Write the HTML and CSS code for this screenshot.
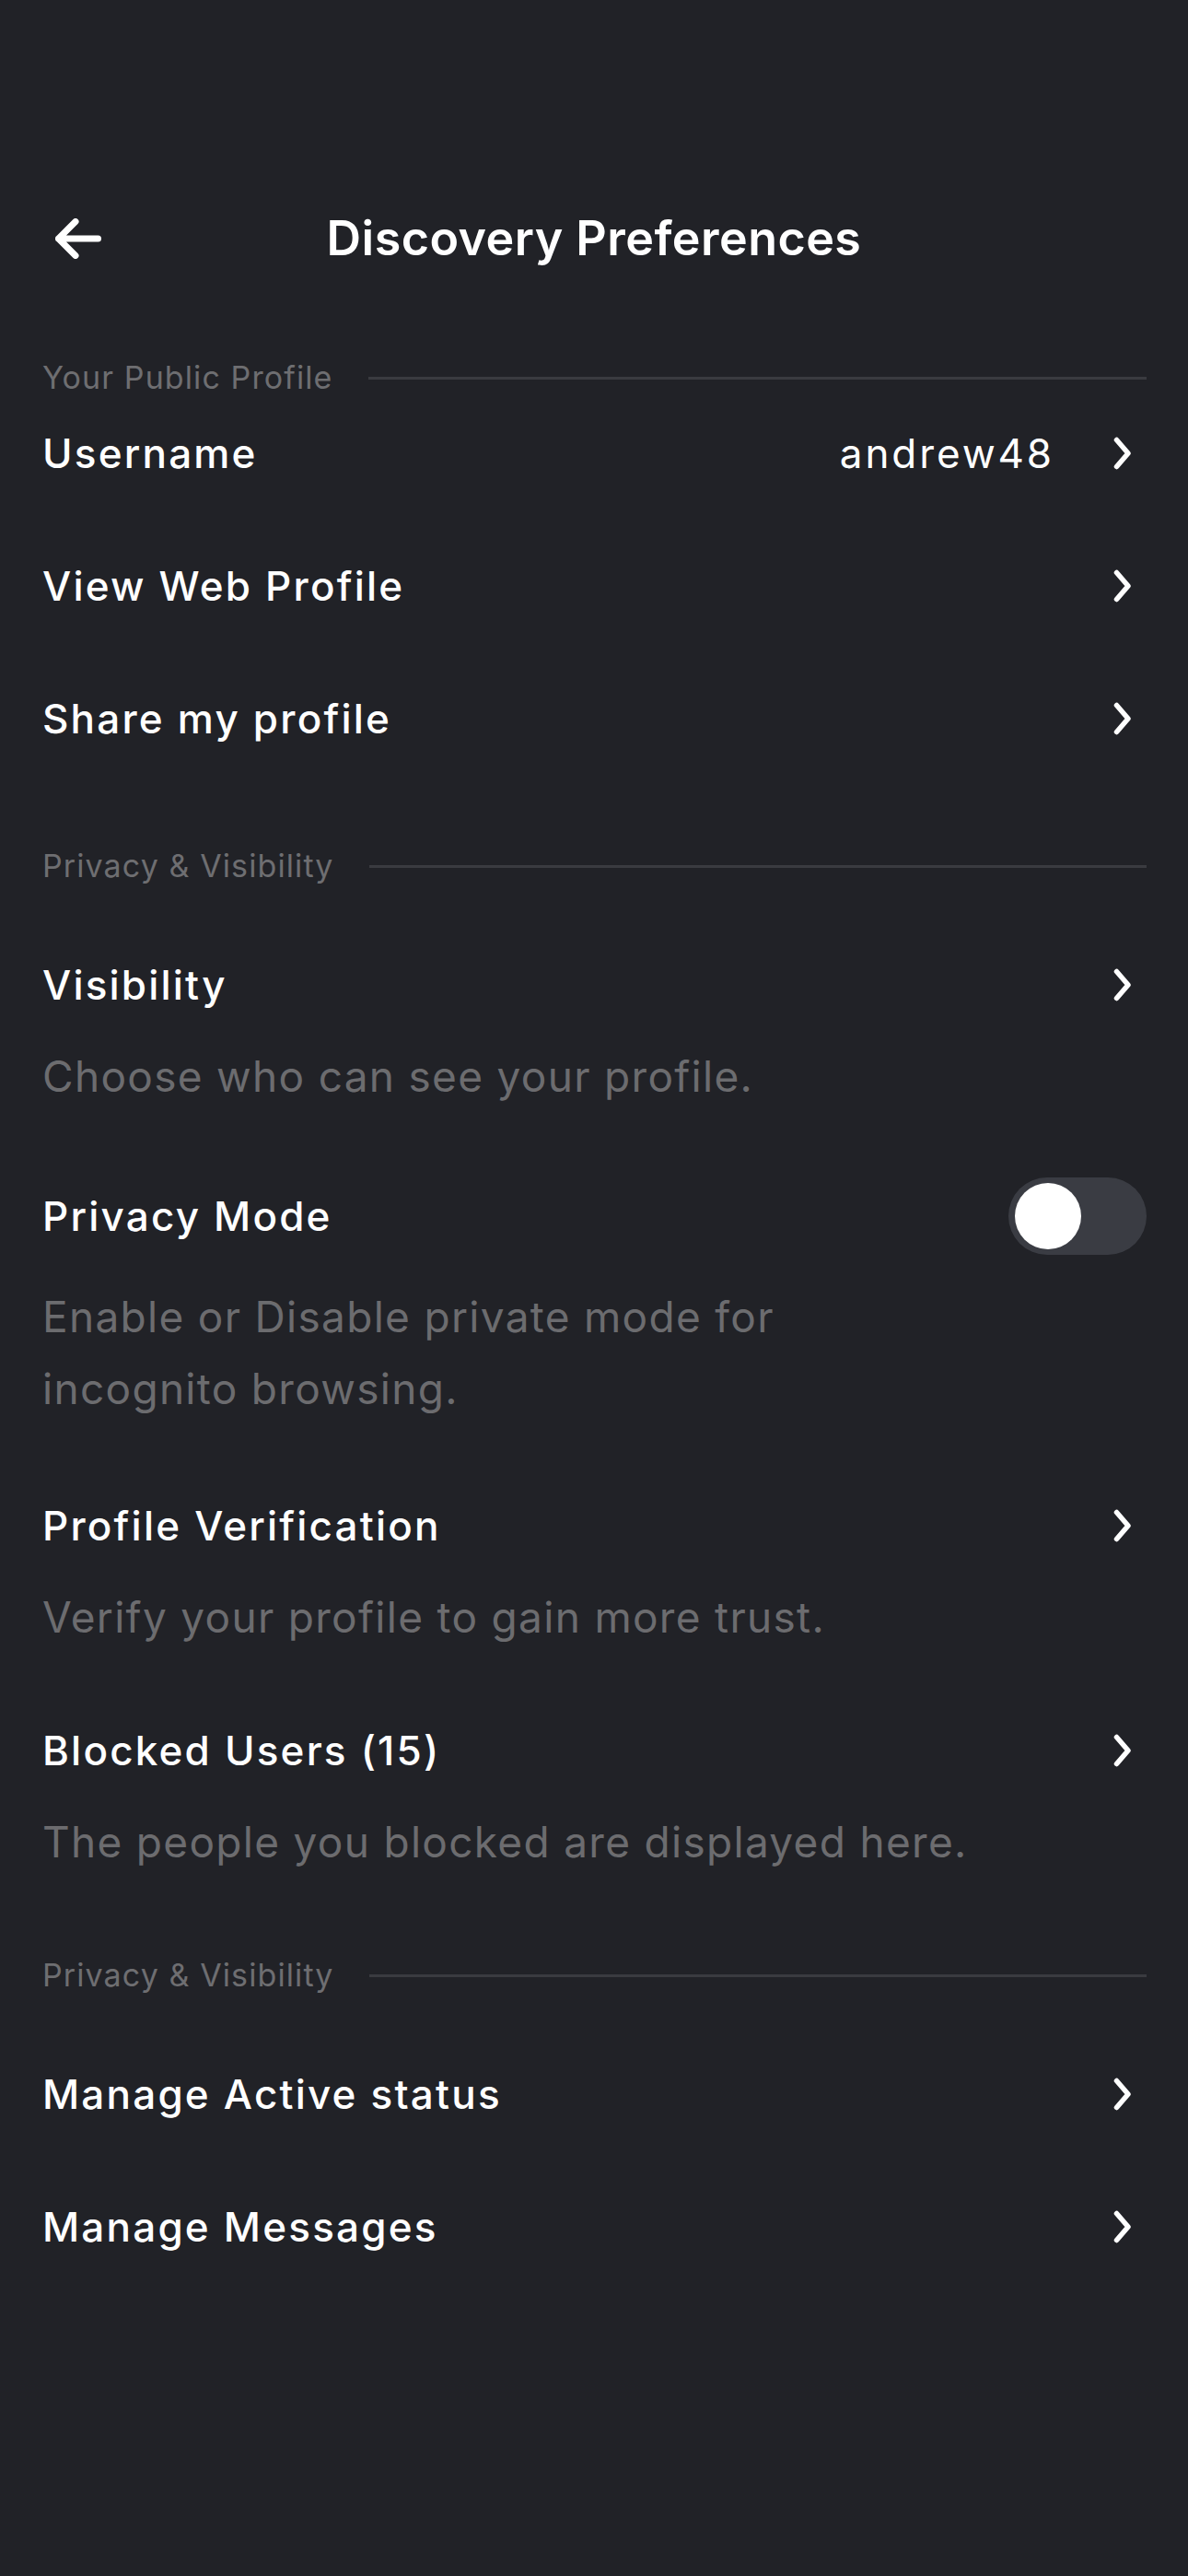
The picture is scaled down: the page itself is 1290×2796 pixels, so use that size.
FILE: index.html
```html
<!DOCTYPE html>
<html lang="en">
<head>
<meta charset="utf-8">
<title>Discovery Preferences</title>
<link rel="stylesheet" href="styles.css">
</head>
<body>
<div class="screen">
  <header class="header">
    <button class="back" aria-label="Back">
      <svg width="50" height="44" viewBox="0 0 50 44"><path d="M22 3.5 L3.5 22 L22 40.5 M3.5 22 H46.5" fill="none" stroke="#fff" stroke-width="7" stroke-linecap="round" stroke-linejoin="round"/></svg>
    </button>
    <h1 class="title">Discovery Preferences</h1>
    <span></span>
  </header>

  <section class="section section--first">
    <div class="section-head"><span class="section-label">Your Public Profile</span><span class="section-rule"></span></div>
    <div class="links links--tight">
      <div class="link-row">
        <span class="row-title">Username</span>
        <span class="row-value">andrew48</span>
        <svg class="chevron" width="20" height="36" viewBox="0 0 20 36"><path d="M3.5 3.5 L16 18 L3.5 32.5" fill="none" stroke="#fff" stroke-width="5.5" stroke-linecap="round" stroke-linejoin="round"/></svg>
      </div>
      <div class="link-row">
        <span class="row-title">View Web Profile</span>
        <svg class="chevron" width="20" height="36" viewBox="0 0 20 36"><path d="M3.5 3.5 L16 18 L3.5 32.5" fill="none" stroke="#fff" stroke-width="5.5" stroke-linecap="round" stroke-linejoin="round"/></svg>
      </div>
      <div class="link-row">
        <span class="row-title">Share my profile</span>
        <svg class="chevron" width="20" height="36" viewBox="0 0 20 36"><path d="M3.5 3.5 L16 18 L3.5 32.5" fill="none" stroke="#fff" stroke-width="5.5" stroke-linecap="round" stroke-linejoin="round"/></svg>
      </div>
    </div>
  </section>

  <section class="section section--second">
    <div class="section-head"><span class="section-label">Privacy &amp; Visibility</span><span class="section-rule"></span></div>
    <div class="item item--lead">
      <div class="link-row">
        <span class="row-title">Visibility</span>
        <svg class="chevron" width="20" height="36" viewBox="0 0 20 36"><path d="M3.5 3.5 L16 18 L3.5 32.5" fill="none" stroke="#fff" stroke-width="5.5" stroke-linecap="round" stroke-linejoin="round"/></svg>
      </div>
      <p class="desc">Choose who can see your profile.</p>
    </div>
    <div class="item item--toggle">
      <div class="link-row link-row--toggle">
        <span class="row-title">Privacy Mode</span>
        <span class="toggle"><span class="knob"></span></span>
      </div>
      <p class="desc desc--wrap">Enable or Disable private mode for incognito browsing.</p>
    </div>
    <div class="item">
      <div class="link-row">
        <span class="row-title">Profile Verification</span>
        <svg class="chevron" width="20" height="36" viewBox="0 0 20 36"><path d="M3.5 3.5 L16 18 L3.5 32.5" fill="none" stroke="#fff" stroke-width="5.5" stroke-linecap="round" stroke-linejoin="round"/></svg>
      </div>
      <p class="desc">Verify your profile to gain more trust.</p>
    </div>
    <div class="item item--tight">
      <div class="link-row">
        <span class="row-title">Blocked Users (15)</span>
        <svg class="chevron" width="20" height="36" viewBox="0 0 20 36"><path d="M3.5 3.5 L16 18 L3.5 32.5" fill="none" stroke="#fff" stroke-width="5.5" stroke-linecap="round" stroke-linejoin="round"/></svg>
      </div>
      <p class="desc">The people you blocked are displayed here.</p>
    </div>
  </section>

  <section class="section section--third">
    <div class="section-head"><span class="section-label">Privacy &amp; Visibility</span><span class="section-rule"></span></div>
    <div class="links links--loose">
      <div class="link-row">
        <span class="row-title">Manage Active status</span>
        <svg class="chevron" width="20" height="36" viewBox="0 0 20 36"><path d="M3.5 3.5 L16 18 L3.5 32.5" fill="none" stroke="#fff" stroke-width="5.5" stroke-linecap="round" stroke-linejoin="round"/></svg>
      </div>
      <div class="link-row">
        <span class="row-title">Manage Messages</span>
        <svg class="chevron" width="20" height="36" viewBox="0 0 20 36"><path d="M3.5 3.5 L16 18 L3.5 32.5" fill="none" stroke="#fff" stroke-width="5.5" stroke-linecap="round" stroke-linejoin="round"/></svg>
      </div>
    </div>
  </section>
</div>
</body>
</html>
```
FILE: styles.css
```css
* { box-sizing: border-box; }

html, body {
  margin: 0;
  padding: 0;
  background: #212227;
}

body {
  font-family: Inter, "Noto Sans", "Liberation Sans", sans-serif;
  color: #ffffff;
}

.screen {
  width: 1290px;
  min-height: 2796px;
  padding-top: 229px;
  background: #212227;
}

.header {
  display: grid;
  grid-template-columns: 1fr auto 1fr;
  align-items: center;
  height: 60px;
  padding: 0 60px;
}

.back {
  background: none;
  border: 0;
  padding: 0;
  width: 50px;
  height: 44px;
  display: flex;
}

.title {
  margin: 0;
  font-size: 52px;
  font-weight: 600;
  line-height: 60px;
  letter-spacing: 0.45px;
}

.section {
  padding: 0 45px 0 46px;
}

.section--first { margin-top: 101px; }
.section--second { margin-top: 110px; }
.section--third { margin-top: 86px; }

.section-head {
  display: flex;
  align-items: center;
  gap: 38px;
  height: 40px;
}

.section-label {
  font-size: 34px;
  line-height: 40px;
  letter-spacing: 1.1px;
  color: #6e6e71;
  white-space: nowrap;
}

.section-rule {
  flex: 1;
  height: 3px;
  background: #3a3b40;
}

.links {
  display: flex;
  flex-direction: column;
  gap: 84px;
}

.links--tight { padding-top: 32px; }
.links--loose { padding-top: 79px; }

.link-row {
  display: flex;
  align-items: center;
  height: 60px;
}

.link-row--toggle { height: 84px; }

.row-title {
  flex: 1;
  font-size: 44px;
  font-weight: 500;
  line-height: 60px;
  letter-spacing: 2.2px;
}

.row-value {
  font-size: 44px;
  font-weight: 400;
  line-height: 60px;
  letter-spacing: 2.9px;
  margin-right: 64px;
}

.chevron {
  flex: none;
  margin-right: 16px;
}

.item { margin-top: 80px; }
.item--lead { margin-top: 79px; }
.item--toggle { margin-top: 71px; }
.item--tight { margin-top: 76px; }

.desc {
  margin: 30px 0 0;
  font-size: 46px;
  line-height: 78px;
  letter-spacing: 1.3px;
  color: #6c6c6f;
}

.desc--wrap {
  margin-top: 28px;
  max-width: 880px;
}

.toggle {
  flex: none;
  width: 150px;
  height: 84px;
  border-radius: 42px;
  background: #3a3c43;
  display: flex;
  align-items: center;
  padding-left: 7px;
}

.knob {
  width: 72px;
  height: 72px;
  border-radius: 50%;
  background: #ffffff;
}
```
